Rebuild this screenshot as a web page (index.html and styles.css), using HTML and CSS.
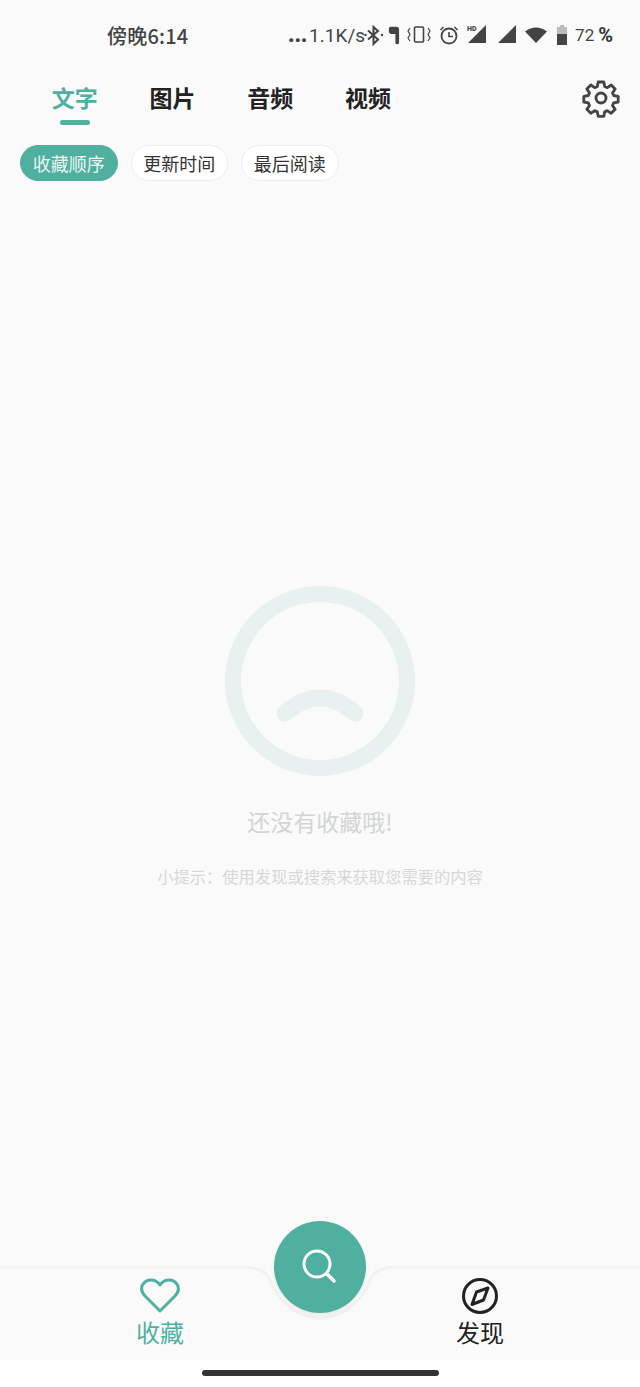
FILE: index.html
```html
<!DOCTYPE html>
<html lang="zh-CN">
<head>
	<meta charset="UTF-8">
	<title>收藏</title>
	<link rel="stylesheet" href="styles.css">
</head>
<body>
	<div class="app">
		<div class="status">
			<span class="clock">傍晚6:14</span>
			<div class="status-right">
				<span class="dots">...</span>
				<span class="speed">1.1K/s</span>
				<svg class="ic bt" width="20" height="22" viewBox="0 0 20 22"><path d="M4 6.500l10 9-4.500 4.500v-17L14 7 4 15.500" fill="none" stroke="#444" stroke-width="2"/><circle cx="1.500" cy="11" r="1.200" fill="#444"/><circle cx="18" cy="11" r="1.200" fill="#444"/></svg>
				<svg class="ic bud" width="12" height="22" viewBox="0 0 13 22"><path d="M3 2h6a3 3 0 0 1 3 3v14a2 2 0 0 1-4 0V10H4a3.500 3.500 0 0 1-3-4V4a2 2 0 0 1 2-2z" fill="#444"/></svg>
				<svg class="ic vib" width="24" height="20" viewBox="0 0 24 20"><rect x="7.500" y="2" width="9" height="15" rx="1" fill="none" stroke="#444" stroke-width="1.600"/><path d="M3 3L1 6l2 3.500L1 13l2 3M21 3l2 3-2 3.500 2 3.500-2 3" fill="none" stroke="#444" stroke-width="1.200"/></svg>
				<svg class="ic alarm" width="20" height="22" viewBox="0 0 20 22"><circle cx="10" cy="12" r="7.500" fill="none" stroke="#444" stroke-width="1.800"/><path d="M10 8v4.500h4M1.500 6l3-3M18.500 6l-3-3" fill="none" stroke="#444" stroke-width="1.600"/></svg>
				<svg class="ic sig1" width="20" height="22" viewBox="0 0 20 22"><path d="M19 1v18H1z" fill="#444"/><text x="0" y="6.500" class="hd">HD</text></svg>
				<svg class="ic sig2" width="20" height="22" viewBox="0 0 20 22"><path d="M19 1v18H1z" fill="#444"/></svg>
				<svg class="ic wifi" width="22" height="20" viewBox="0 0 22 20"><path d="M0 6.500Q11-1.500 22 6.500L11 18z" fill="#444"/></svg>
				<svg class="ic cell" width="12" height="22" viewBox="0 0 12 22"><path d="M4 1h4v2h3v18H1V3h3z" fill="#bbb"/><path d="M1 10h10v11H1z" fill="#444"/></svg>
				<span class="batt">72</span>
				<span class="pct">%</span>
			</div>
		</div>

		<div class="tabs">
			<div class="tab on">文字</div>
			<div class="tab">图片</div>
			<div class="tab">音频</div>
			<div class="tab">视频</div>
			<svg class="gear" width="40" height="40" viewBox="0 0 24 24"><path d="M10.300 2.400h3.400l.5 2.700 1.600.7 2.300-1.600 2.400 2.400-1.600 2.300.7 1.600 2.700.5v3.400l-2.700.5-.7 1.600 1.600 2.300-2.400 2.400-2.300-1.600-1.600.7-.5 2.700h-3.400l-.5-2.700-1.600-.7-2.300 1.600-2.400-2.400 1.600-2.300-.7-1.600-2.700-.5v-3.400l2.700-.5.7-1.600-1.600-2.300 2.400-2.400 2.300 1.600 1.600-.7z" fill="none" stroke="#444" stroke-width="1.700" stroke-linejoin="round"/><circle cx="12" cy="12" r="3" fill="none" stroke="#444" stroke-width="1.700"/></svg>
		</div>

		<div class="chips">
			<span class="chip on">收藏顺序</span>
			<span class="chip">更新时间</span>
			<span class="chip">最后阅读</span>
		</div>

		<div class="empty">
			<svg class="face" width="192" height="192" viewBox="0 0 192 192"><circle cx="96" cy="96" r="87" fill="none" stroke="#e9f0f0" stroke-width="16"/><path d="M61 128Q96 98 131 128" fill="none" stroke="#e9f0f0" stroke-width="17" stroke-linecap="round"/></svg>
			<p class="empty-title">还没有收藏哦!</p>
			<p class="empty-tip">小提示：使用发现或搜索来获取您需要的内容</p>
		</div>

		<div class="nav">
			<svg class="nav-edge" width="640" height="60" viewBox="0 0 640 60"><path d="M0 1H245Q262 1 269 12C276 34 296 52 320 52S364 34 371 12Q378 1 395 1H640" fill="none" stroke="#f2f2f2" stroke-width="3"/></svg>
			<div class="nav-item on">
				<svg width="40" height="36" viewBox="0 0 40 36"><path d="M20 33L5 18C-3 9 5 2 11 2c4 0 7 2 9 5 2-3 5-5 9-5 6 0 14 7 6 16z" fill="none" stroke="#4fb0a0" stroke-width="3" stroke-linejoin="round"/></svg>
				<span>收藏</span>
			</div>
			<div class="nav-item">
				<svg width="38" height="36" viewBox="0 0 38 36"><circle cx="19" cy="18" r="16.500" fill="none" stroke="#222" stroke-width="3"/><path d="M27 10L22.500 22 11 26.500 15.500 14z" fill="none" stroke="#222" stroke-width="3" stroke-linejoin="round"/></svg>
				<span>发现</span>
			</div>
			<div class="fab">
				<svg width="40" height="40" viewBox="0 0 40 40"><circle cx="17" cy="17" r="13" fill="none" stroke="#fff" stroke-width="3"/><path d="M26.500 26.500L34 34" stroke="#fff" stroke-width="3.500" stroke-linecap="round"/></svg>
			</div>
		</div>

		<div class="home"><div class="home-bar"></div></div>
	</div>
</body>
</html>
```

FILE: styles.css
```css
*{
	padding: 0;
	margin: 0;
	box-sizing: border-box;
}
body{
	background: #fafafa;
	font-family: "Noto Sans CJK SC", "Noto Sans", sans-serif;
}
.app{
	width: 640px;
	height: 1387px;
	display: flex;
	flex-direction: column;
	overflow: hidden;
}
.status{
	height: 70px;
	display: flex;
	align-items: center;
	justify-content: space-between;
	padding: 0 27px 0 107px;
	color: #444;
}
.clock{
	font-size: 20px;
	font-weight: 500;
	letter-spacing: .2px;
}
.status-right{
	display: flex;
	align-items: center;
}
.dots{
	font-family: Roboto, sans-serif;
	font-size: 22px;
	font-weight: 900;
	letter-spacing: -.3px;
	line-height: 26px;
	width: 21px;
}
.speed{
	font-family: Roboto, sans-serif;
	font-size: 19px;
	width: 55px;
}
.ic{
	display: block;
}
.bud{
	margin-left: 4px;
}
.vib{
	margin-left: 7px;
}
.alarm{
	margin-left: 8px;
}
.sig1{
	margin-left: 8px;
}
.sig2{
	margin-left: 10px;
}
.wifi{
	margin-left: 8px;
}
.cell{
	margin-left: 9px;
}
.hd{
	font-family: Roboto, sans-serif;
	font-size: 7px;
	font-weight: 900;
	fill: #444;
	stroke: #fafafa;
	stroke-width: 1.500px;
	paint-order: stroke;
}
.batt{
	font-family: Roboto, sans-serif;
	font-size: 17px;
	margin-left: 7px;
}
.pct{
	font-family: Roboto, sans-serif;
	font-size: 20px;
	font-weight: 700;
	margin-left: 4px;
	color: #333;
}
.tabs{
	height: 60px;
	display: flex;
	position: relative;
	padding-left: 26px;
}
.tab{
	width: 97.700px;
	height: 55px;
	text-align: center;
	font-size: 23px;
	font-weight: 700;
	line-height: 55px;
	color: #222;
	position: relative;
}
.tab.on{
	color: #4fb0a0;
}
.tab.on::after{
	content: "";
	position: absolute;
	left: 34px;
	bottom: 0;
	width: 30px;
	height: 5px;
	border-radius: 3px;
	background: #4fb0a0;
}
.gear{
	position: absolute;
	right: 19px;
	top: 8px;
}
.chips{
	display: flex;
	gap: 13px;
	padding: 15px 0 0 20px;
}
.chip{
	width: 97.500px;
	height: 36px;
	border: 1px solid #eeeeee;
	border-radius: 18px;
	background: #fff;
	font-size: 18px;
	line-height: 34px;
	text-align: center;
	color: #333;
}
.chip.on{
	background: #4fb0a0;
	border-color: #4fb0a0;
	color: #eaf6f3;
}
.empty{
	flex: 1;
	display: flex;
	flex-direction: column;
	align-items: center;
	padding-top: 404px;
}
.face{
	display: block;
}
.empty-title{
	margin-top: 27px;
	font-size: 23px;
	line-height: 34px;
	color: #d2d5d5;
}
.empty-tip{
	margin-top: 26px;
	font-size: 16.300px;
	line-height: 24px;
	color: #d5d8d8;
}
.nav{
	height: 94px;
	display: flex;
	position: relative;
	background: #fafafa;
}
.nav-edge{
	position: absolute;
	left: 0;
	top: 0;
}
.nav-item{
	width: 320px;
	display: flex;
	flex-direction: column;
	align-items: center;
	padding-top: 12px;
	font-size: 24px;
	line-height: 36px;
	color: #222;
}
.nav-item.on{
	color: #4fb0a0;
}
.nav-item svg{
	display: block;
}
.fab{
	position: absolute;
	left: 274px;
	top: -45px;
	width: 92px;
	height: 92px;
	border-radius: 50%;
	background: #4fb0a0;
	display: flex;
	align-items: center;
	justify-content: center;
	box-shadow: 0 2px 4px rgba(0,0,0,.08);
}
.home{
	height: 27px;
	background: #fff;
	padding-top: 10px;
}
.home-bar{
	width: 237px;
	height: 6px;
	margin: 0 auto;
	border-radius: 3px;
	background: #333;
}
```
